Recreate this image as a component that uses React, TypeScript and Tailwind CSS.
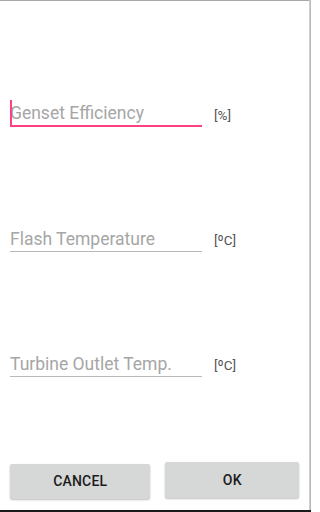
import React from "react";

function Field({ label, unit, focused }: { label: string; unit: string; focused?: boolean }) {
  return (
    <div className="flex items-end">
      <div
        className={
          focused
            ? "relative ml-[10px] w-[192px] h-[30px] border-b-2 border-[#ff4081] flex items-end"
            : "relative ml-[10px] w-[192px] h-[30px] border-b border-[#b8b8b8] flex items-end"
        }
      >
        {focused && <div className="absolute left-0 top-[3px] w-[2px] h-[26px] bg-[#ff4081]" />}
        <span
          className={
            focused
              ? "text-[17.5px] leading-[20px] pb-[2px] text-[#a6a6a6]"
              : "text-[17.5px] leading-[20px] pb-[2.5px] text-[#a6a6a6]"
          }
        >
          {label}
        </span>
      </div>
      <span className="ml-[12px] text-[13.5px] leading-[16px] pb-[4px] text-[#555555]">{unit}</span>
    </div>
  );
}

export default function App() {
  return (
    <div
      className="w-[311px] h-[512px] bg-[#1a1a1a] overflow-hidden"
      style={{ fontFamily: "Roboto, 'Liberation Sans', sans-serif" }}
    >
      <div className="w-[311px] h-[510px] flex">
        <div className="w-[309px] h-[510px] bg-white border-t border-[#a8a8a8] flex flex-col">
          <div className="h-[96px]" />
          <Field label="Genset Efficiency" unit="[%]" focused />
          <div className="h-[95px]" />
          <Field label="Flash Temperature" unit="[ºC]" />
          <div className="h-[95px]" />
          <Field label="Turbine Outlet Temp." unit="[ºC]" />
          <div className="flex-1" />
          <div className="flex items-center px-[10px] gap-[15px] pb-[11px]">
            <button className="w-[141px] h-[35px] mt-[1px] rounded-[2px] bg-[#d6d7d7] shadow-[0_1px_2px_rgba(0,0,0,0.25)] text-[14px] font-medium text-[#1c1c1c] tracking-[0.2px]">
              CANCEL
            </button>
            <button className="w-[134px] h-[36px] -mt-[2px] rounded-[2px] bg-[#d6d7d7] shadow-[0_1px_2px_rgba(0,0,0,0.25)] text-[14px] font-medium text-[#1c1c1c] tracking-[0.2px]">
              OK
            </button>
          </div>
        </div>
        <div className="w-[2px] h-[510px] bg-[linear-gradient(to_right,#d9d9d9,#b0b0b0)]" />
      </div>
    </div>
  );
}
